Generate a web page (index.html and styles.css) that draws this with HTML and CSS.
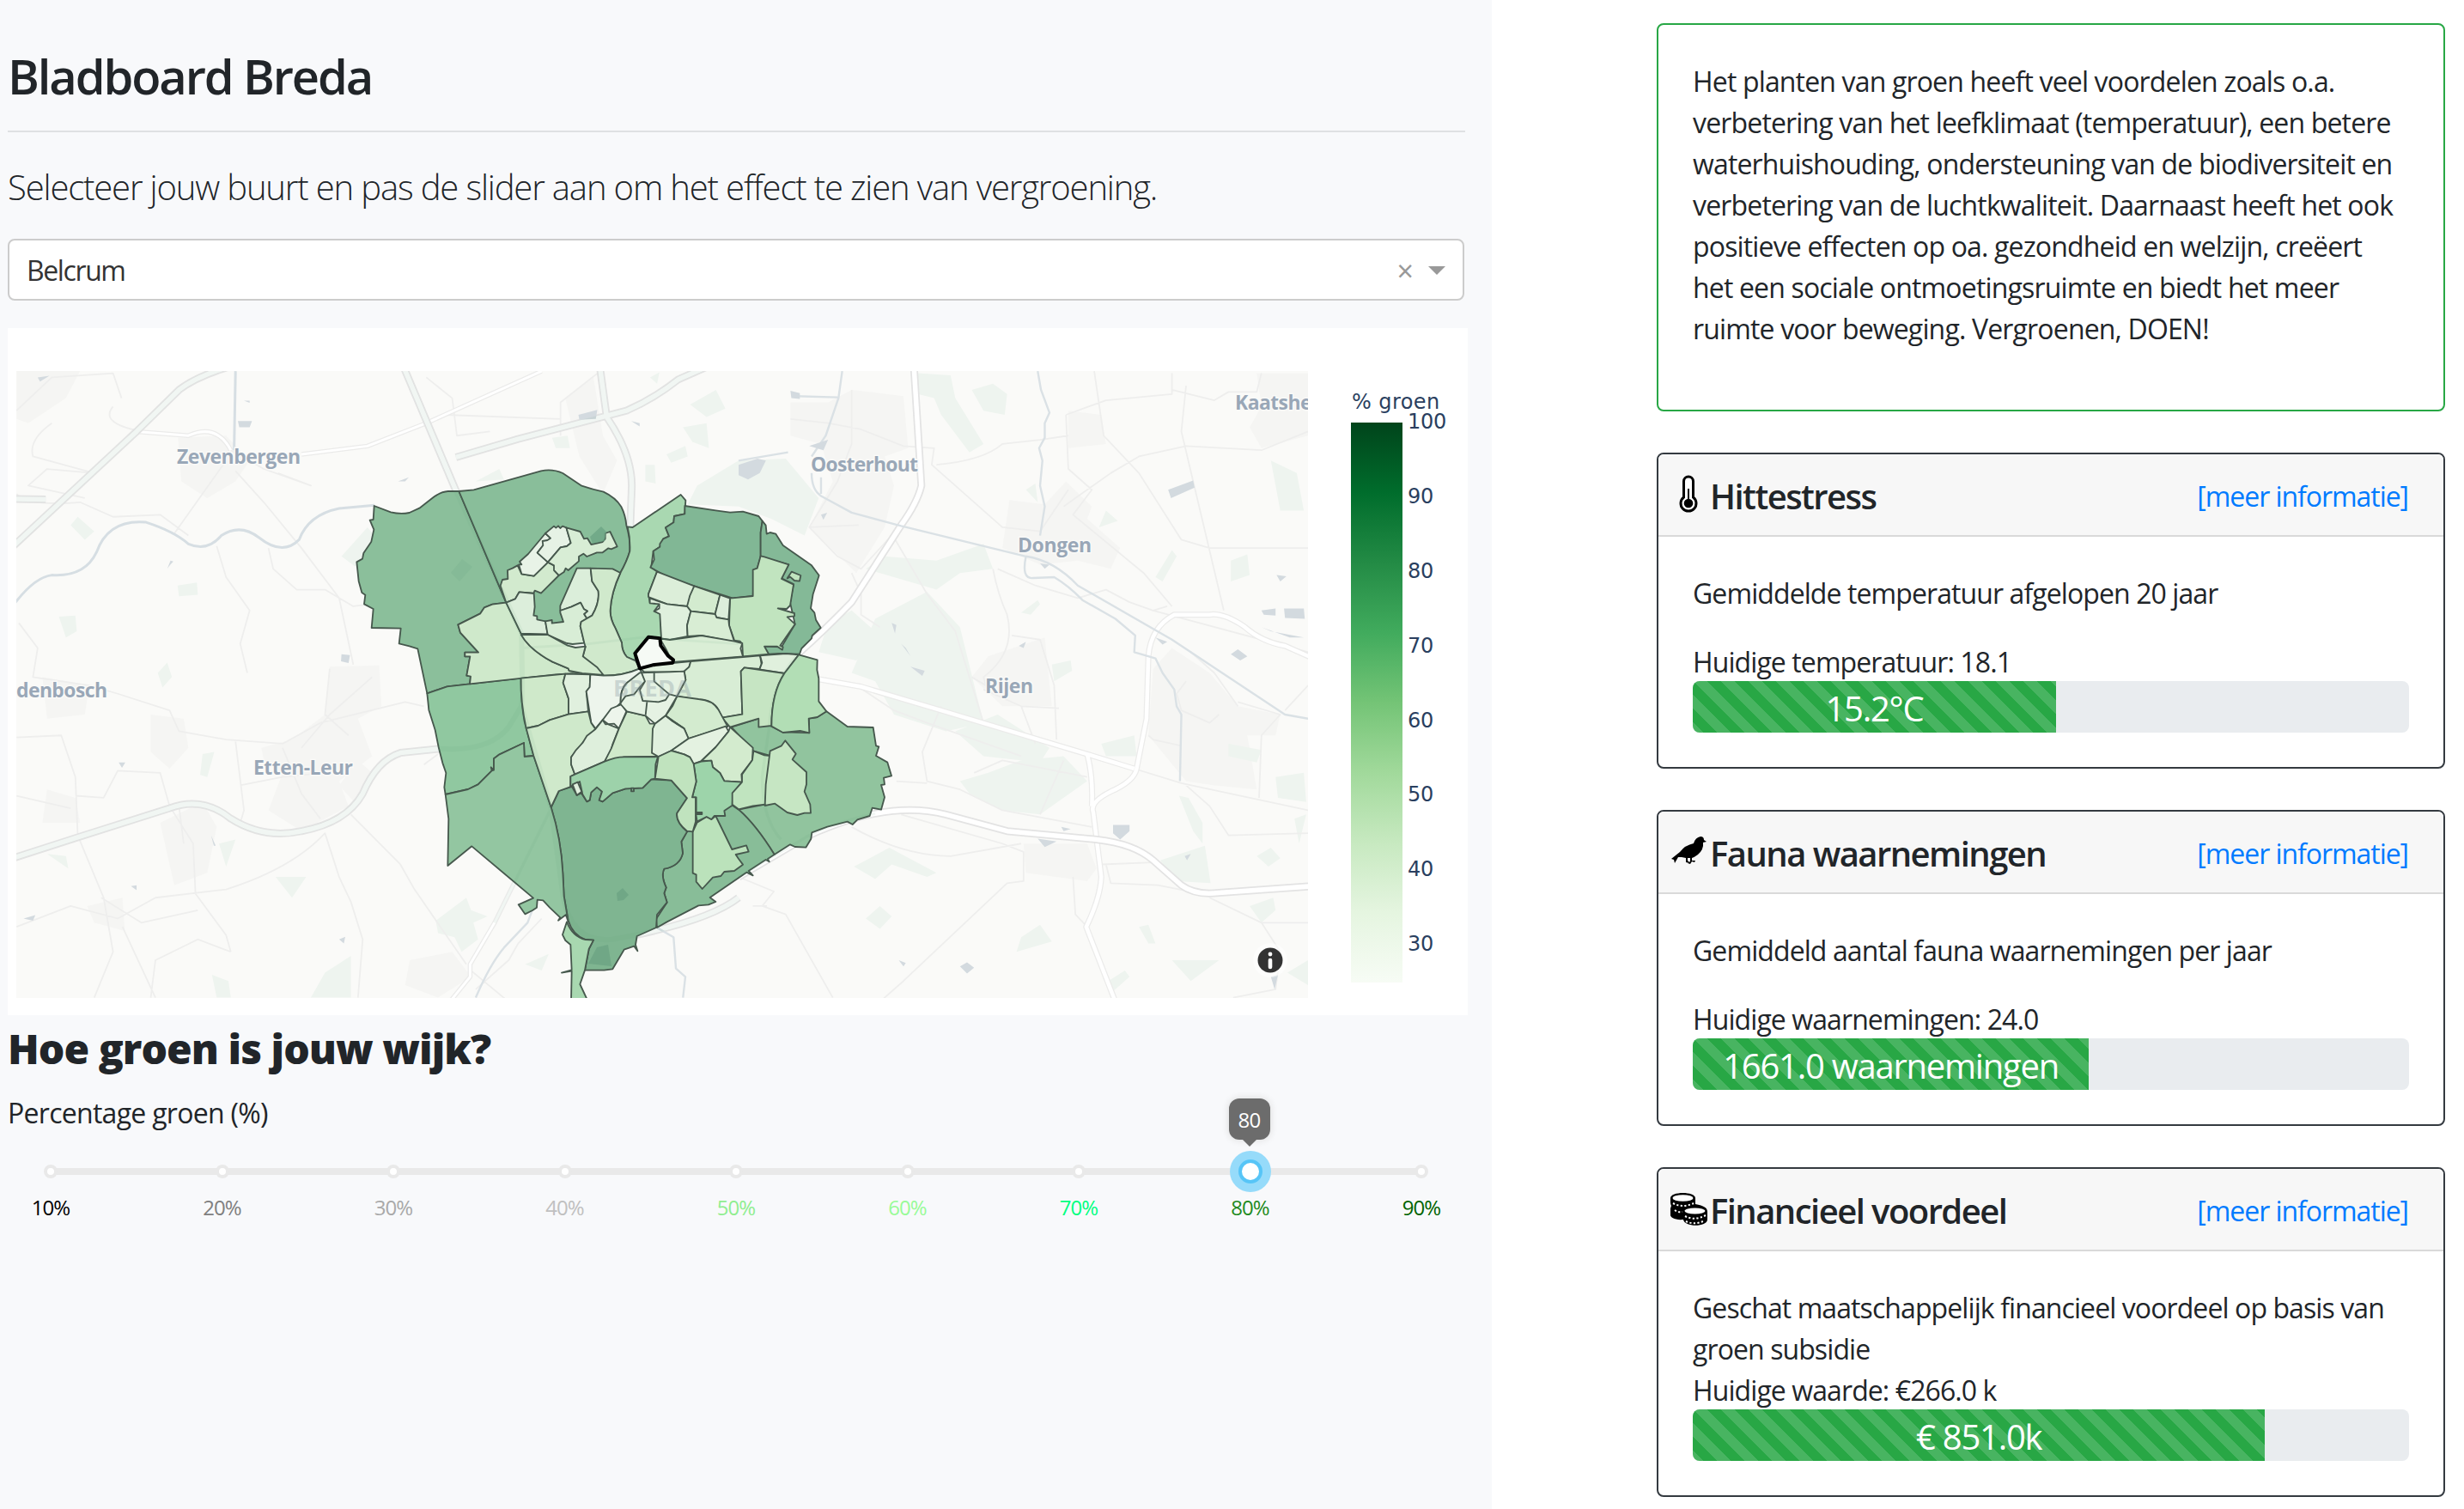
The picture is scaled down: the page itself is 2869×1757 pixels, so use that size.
FILE: index.html
```html
<!DOCTYPE html>
<html lang="nl">
<head>
<meta charset="utf-8">
<title>Bladboard Breda</title>
<link rel="stylesheet" href="styles.css">
</head>
<body>
<main class="page">
<section class="panel">
<h1 class="title"><span>Bladboard Breda</span></h1>
<hr class="rule">
<p class="lead">Selecteer jouw buurt en pas de slider aan om het effect te zien van vergroening.</p>
<div class="select"><span class="select-value">Belcrum</span><span class="select-clear">×</span><span class="select-arrow"></span></div>
<svg class="chart" viewBox="9 382 1700 800">
<defs>
<linearGradient id="greens" x1="0" y1="1" x2="0" y2="0">
<stop offset="0" stop-color="#f7fcf5"/><stop offset=".125" stop-color="#e5f5e0"/><stop offset=".25" stop-color="#c7e9c0"/><stop offset=".375" stop-color="#a1d99b"/><stop offset=".5" stop-color="#74c476"/><stop offset=".625" stop-color="#41ab5d"/><stop offset=".75" stop-color="#238b45"/><stop offset=".875" stop-color="#006d2c"/><stop offset="1" stop-color="#00441b"/>
</linearGradient>
<clipPath id="frame"><rect x="19" y="432" width="1504" height="730"/></clipPath>
<g id="west-roads">
<path d="M0 475L290 170L380 70Q420 35 500 10M0 1205L165 1145L360 1075Q430 1045 490 1100Q560 1150 640 1130Q735 1110 770 1040Q800 960 850 942L935 932Q1040 940 1080 880L1107 830M855 10L968 312L1107 655Q1110 800 1107 830L1170 1075L1196 1290Q1215 1400 1300 1390Q1500 1350 1568 1290"/>
<path d="M968 232L1100 188L1330 120Q1390 90 1440 45L1500 15M1273 10L1288 135Q1345 230 1341 310L1338 400M0 332L97 333"/>
</g>
<g id="east-roads">
<path d="M372 10L388 300Q380 340 345 395L240 580Q180 650 130 700Q70 770 65 880M0 1240L150 1140Q230 1100 290 1088Q370 1070 440 1090L570 1130L760 1150Q840 1160 880 1200L940 1260Q970 1285 1020 1278L1220 1262"/>
</g>
<g id="east-links">
<path d="M120 755L260 783L430 840L740 945L840 980M1220 715L1160 685Q1110 675 1075 640Q1030 605 1000 610L925 610Q875 640 870 710L866 860L845 980Q840 1010 790 1035Q745 1060 753 1085L770 1240Q768 1290 738 1360L800 1540M740 945Q753 1000 750 1070"/>
</g>
</defs>
<rect x="9" y="382" width="1700" height="800" fill="#fff"/>
<g clip-path="url(#frame)">
<rect x="19" y="432" width="1504" height="730" fill="#fafaf8"/>
<!-- western basemap tiles -->
<g class="tile" transform="translate(0 420) scale(.54845 .4847)">
<path class="town" d="M35 25L170 25L140 90L60 150L35 140ZM378 185L480 180L530 240L500 290L440 330L385 290ZM700 735L805 732L810 830L760 860L790 950L720 1010L740 1070L640 1130L570 1080L600 990L560 960L555 930L620 910L690 850ZM320 850L390 860L400 930L360 980L320 940ZM90 760L190 780L180 850L100 860ZM340 1110L430 1060L460 1120L440 1230L370 1260ZM100 1030L160 1050L170 1110L90 1110ZM185 1310L260 1290L265 1370L200 1350ZM870 1440L960 1420L1000 1480L930 1530L860 1500ZM1200 90L1260 40L1280 180L1310 240L1280 320L1230 230ZM720 1020L760 960L790 990L760 1070Z"/>
<path class="wood" d="M150 395L165 375L200 410L180 430ZM377 540L418 533L420 562L380 566ZM125 615L160 612L163 650L140 665ZM335 750L355 725L365 760L345 785ZM430 945L455 940L440 1000L425 995ZM925 1345L990 1290L1000 1320L1035 1335L1005 1350L1015 1390L980 1420L965 1385L930 1375ZM660 1530L690 1470L745 1430L745 1530ZM450 1475L485 1490L490 1530L460 1530ZM585 1240L650 1240L620 1290ZM1465 105L1520 70L1540 115L1500 135ZM1450 160L1500 150L1505 210L1470 195ZM1415 225L1455 205L1460 230L1425 245ZM1370 250L1390 250L1392 295L1370 290ZM1010 290L1060 260L1070 285ZM1115 1450L1165 1425L1150 1465ZM725 470L780 400L795 420L755 495ZM100 1185L140 1190L145 1220ZM1380 40L1400 28L1395 55ZM1172 185L1205 180L1210 210L1180 210ZM1480 300L1568 240L1568 350L1460 345ZM465 1160L500 1150L480 1215Z"/>
<path class="lane" d="M35 120L110 40L240 30L258 90M290 170L400 180Q460 150 490 215L560 260L660 300L590 270M480 240L370 415M500 265L560 340L640 450L720 570L750 730M110 150Q60 190 70 230L200 270L100 260L60 300L180 330M240 110Q210 150 300 170M35 320Q60 350 170 340L240 375L340 370L400 420M640 225L780 205L905 150L1150 25M905 40L960 90L970 180L1040 170M945 130L1190 140M1190 180L1190 100L1280 20M460 445L480 520L530 600L510 680L525 750M570 450L580 500L630 550L690 550L750 590L820 580L870 590L900 630L1100 640M40 630L80 690L70 760L190 780L250 800L360 840L380 890L480 910L600 920L680 870L860 820L900 830M640 930L700 850L790 760M500 915L518 1080L510 1110M600 930L640 1040L680 1100M35 905L130 900L160 1000L165 1140L220 1290L240 1420L200 1530M160 1045L220 1050L250 985L340 990L360 1070L410 1160L415 1280L480 1380L490 1420M35 1045L150 1075M35 1360L150 1310L250 1340L330 1290L480 1270Q620 1220 690 1135L720 1240L745 1300L770 1390L760 1530M745 1090L850 1210L880 1270L990 1450M215 1290L300 1350L420 1320M260 1360L330 1530M490 1420L420 1390L330 1440L320 1530M380 1070L390 1160M700 740L690 850L740 900M510 1020L600 1000L690 990M900 970L930 945M1150 1340L1100 1400L1080 1440L1010 1510M1000 1465L1080 1540"/>
<path class="casing thin" d="M290 170L400 180Q460 150 490 215M640 225L780 205L905 150L1150 25"/><path class="road thin" d="M290 170L400 180Q460 150 490 215M640 225L780 205L905 150L1150 25"/>
<use href="#west-roads" class="casing"/><use href="#west-roads" class="road"/>
<path class="casing thin" d="M1170 1075L1050 1350L998 1450L998 1480L955 1540"/><path class="road thin" d="M1170 1075L1050 1350L998 1450L998 1480L955 1540"/>
<path class="river" d="M20 600Q70 520 110 515Q180 520 205 460Q230 380 310 388Q370 410 400 440Q440 460 470 420Q510 390 550 425Q600 470 635 430Q655 370 720 355L795 347M500 25L497 215"/>
<path class="stream" d="M1010 1530Q1040 1450 1070 1410L1120 1350L1130 1320M1395 1362L1430 1385L1435 1460L1455 1480L1450 1530"/>
<path class="water" d="M505 145L535 145L530 160L508 160ZM725 705L743 707L740 726L724 722ZM1228 130L1268 118L1265 140L1230 142ZM50 1340L75 1332L70 1345ZM720 1390L733 1384L730 1400ZM278 1262L290 1260L290 1272ZM1340 145L1358 150L1358 158ZM845 290L868 280L860 290ZM518 96L530 96L530 101ZM252 965L266 965L259 978ZM80 40L105 36L85 50ZM448 1140L458 1165L454 1165ZM355 500L362 480L368 482L360 492Z"/>
</g>
<!-- eastern basemap tiles -->
<g class="tile" transform="translate(860 420) scale(.54845 .4847)">
<path class="town" d="M240 70L350 85L360 210L310 230L330 300L310 400L250 510L150 400L200 290L175 200L110 180L110 100L190 100ZM575 335L650 345L695 290L750 350L740 380L810 450L790 500L720 480L640 490L560 450ZM530 710L650 665L665 830L560 830L495 760ZM920 690L1000 750L1060 830L1150 850L1140 900L1080 900L1100 1030L1010 1020L950 1010L870 900L880 740ZM1100 30L1209 30L1209 180L1110 210L1085 160L1110 110ZM605 1160L740 1160L760 1220L740 1250L610 1230ZM700 120L770 130L780 200L700 210Z"/>
<path class="wood" d="M380 30L450 35L460 90L520 200L490 220L430 130L415 90L380 80ZM495 70L540 55L570 80L565 130L520 120ZM0 240L100 235L170 330L140 420L70 380L0 350ZM290 620L400 555L470 640L520 870L440 890L330 850L290 770L240 750ZM190 630L240 600L300 660L250 720L170 700ZM270 500L310 470L420 480L520 440L540 500L470 510L420 550ZM610 310L630 295L635 340ZM885 520L920 455L930 470L900 530ZM1045 480L1080 465L1085 515L1045 530ZM1130 240L1185 270L1200 360L1150 360ZM665 730L705 720L708 745L670 770ZM460 890L550 850L660 930L640 965L520 950ZM470 1010L530 990L600 960L690 950L740 1010L640 1090L560 1080L490 1040ZM1140 1000L1200 990L1205 1060L1145 1050ZM935 1045L955 1050L985 1110L985 1160L965 1130ZM1180 1100L1205 1090L1190 1160ZM895 1200L990 1165L1002 1255L930 1250ZM245 1215L320 1170L420 1230L400 1240L325 1210L290 1245ZM270 1340L300 1310L325 1335L300 1365ZM590 1420L600 1385L640 1355L665 1395ZM850 1360L870 1355L885 1400L870 1400ZM920 1440L1020 1440L960 1490ZM1085 1310L1135 1290L1140 1320L1110 1350ZM1165 1470L1209 1440L1209 1500ZM785 1490L820 1465L830 1480L790 1520ZM1100 1190L1130 1170L1150 1195L1125 1215ZM600 605L635 575L640 585L620 610ZM1040 920L1110 935L1100 965L1040 950ZM765 400L780 360L805 385ZM770 920L840 900L845 950L780 950Z"/>
<path class="lane" d="M240 70L240 200L210 290L150 400L210 470L260 500L345 395M110 140L190 150L260 165L350 205L415 210L410 250L560 400L640 410L700 310M420 250Q520 240 560 200L640 190L700 180M755 25L775 180L850 270L940 430L1000 450L1209 450M695 130L700 260L750 310L710 370L860 510L920 590M695 130L780 95L920 80L920 30M920 70L1010 95L1040 75L1100 75L1110 30M950 60L940 170L1030 600M690 350L790 270L850 230L950 205L1110 215L1209 170M150 400L255 395M330 425L400 560L460 650L520 870M540 500Q550 560 570 610Q590 700 520 760L530 800M550 500L630 540L720 570L780 550L830 580L880 600L910 590M580 660L640 670L670 780L675 910M520 790L600 830L680 835M600 830L630 920M430 830L390 940L400 1010L470 1030L560 1080L750 1120M500 990L560 960L740 1000M640 1090L690 960M840 980L940 1015L1209 1080M880 600L1209 700M950 770L930 800L940 840L1000 870L1020 850M1060 820L1150 850L1110 900L1105 1050M1160 840L1209 780M240 510L260 560L260 610L300 640M240 1120Q350 1190 450 1190L600 1160M345 1090L560 1160L605 1180L605 1250L570 1255L350 1490L300 1540M0 1240L75 1275L50 1310L100 1330L200 1530M780 1210L790 1255L890 1260L980 1280M770 1210L880 1205M1000 1290L1110 1350L1209 1350M1110 1350L1150 1420L1140 1510L1050 1530M950 1020L1000 1070L1040 1140L1209 1135M335 1010L400 1015M710 1240L715 1330L740 1360M870 900L880 910L940 925M960 700L1010 750L1060 830M540 790L495 760M60 1310L30 1310M250 780L330 840L400 870L600 950"/>
<use href="#east-links" class="casing link"/><use href="#east-links" class="road link"/>
<use href="#east-roads" class="casing"/><use href="#east-roads" class="road"/>
<path class="stream" d="M635 25L642 70L660 125L650 150L650 185L638 210L645 240L640 300L650 350L640 420M155 270Q155 310 175 325L240 365L345 397L610 470Q670 480 720 540L920 670L1160 850L1209 860M610 470Q600 525 625 522L670 520Q700 540 730 575L800 620L842 660L840 700L885 715L900 750L925 790L930 830L940 850L937 1010M220 25L212 90L185 180L155 230M175 320L175 280M0 240L105 220M120 85L210 88"/>
<path class="water" d="M0 250L40 235L58 240L45 270L20 285L0 275ZM912 310L965 288L968 305L918 330ZM1158 595L1200 595L1202 620L1160 618ZM795 1115L830 1115L830 1130L810 1150L795 1135ZM470 1455L485 1445L500 1458L485 1472ZM635 1148L675 1155L650 1168ZM640 487L660 490L650 500ZM1045 705L1060 693L1080 710L1065 720ZM325 630L335 635L332 655ZM345 680L355 690L365 710ZM365 735L395 745L390 757ZM150 205L190 190L180 215ZM110 72L130 78L130 92L112 90ZM1130 1480L1145 1475L1138 1510ZM340 1440L355 1447L350 1455ZM1110 600L1140 595L1140 612L1115 610ZM1110 640L1130 650L1200 665L1170 665ZM175 370L188 365L180 382ZM595 685L610 675L605 690ZM885 665L910 675L900 682ZM1142 515L1163 518L1150 530ZM947 1190L960 1185L952 1200ZM685 1120L705 1125L690 1130Z"/>
</g>
<g class="places">
<text x="206" y="540" textLength="144">Zevenbergen</text><text x="19" y="812" textLength="106">denbosch</text><text x="295" y="902" textLength="116">Etten-Leur</text><text x="944" y="549" textLength="125">Oosterhout</text><text x="1185" y="643" textLength="86">Dongen</text><text x="1147" y="807" textLength="56">Rijen</text><text x="1438" y="477" textLength="104">Kaatsheu</text>
</g>
<!-- neighbourhoods, in thirds of a pixel -->
<g class="areas" transform="translate(400 520) scale(.333333)">
<path fill="#8bbf9b" d="M107 207L165 229Q198 237 230 231L265 215L310 180Q340 157 365 156L403 156L568 545L520 551L492 562L478 583L400 622L408 650L471 719L424 719L424 733L442 733L430 800L444 803L441 829L362 838L292 862L259 706L230 697L194 688L200 635L98 633L104 567L72 550L76 518L64 510L53 470L46 403L66 392L70 372L97 332L106 290L92 257L104 255Z"/>
<path fill="#89be9a" d="M403 156L455 151L690 85Q730 77 766 93L832 137Q870 150 908 158Q950 178 970 210Q985 240 988 275Q1002 320 1000 365Q990 400 967 441L820 620L660 620L600 560L568 545Z"/>
<path fill="#a9d8b1" d="M992 280L1010 282L1178 168L1195 188L1192 235L1155 243L1153 265L1125 283L1137 313L1117 322L1105 350L1082 365L1075 420L1095 437L1065 515L1070 545L1103 550L1085 575L1108 585L1110 670L1065 663L1018 720L1020 748L990 735Q972 715 972 685L950 635Q930 600 932 570Q935 510 967 441Q990 400 1000 365Q1002 320 992 280Z"/>
<path fill="#91c49e" d="M1687 925L1760 978L1850 981L1860 1045L1870 1048L1860 1080L1900 1103L1914 1150L1887 1157L1890 1180L1878 1182L1890 1225L1878 1268L1847 1262L1838 1290L1795 1303L1778 1320L1760 1310L1690 1328L1636 1348L1633 1370L1615 1400L1577 1398L1560 1390L1505 1425Q1440 1320 1380 1268L1472 1250L1490 1080L1432 1063L1355 980L1450 950L1495 977L1535 997L1627 1000L1625 950L1655 945Z"/>
<path fill="#88bd98" d="M1505 1425L1482 1440L1487 1450L1475 1443L1415 1482L1430 1498L1408 1487L1280 1575L1300 1590L1275 1600L1240 1603L1130 1660L1095 1680L1092 1650L1130 1592L1120 1560L1127 1540Q1108 1500 1120 1475Q1175 1465 1185 1420L1180 1380L1200 1345L1235 1310L1358 1253L1380 1268Q1440 1320 1505 1425Z"/>
<path fill="#7fb591" d="M725 1260L752 1203L798 1188L815 1218L830 1210L850 1240L860 1235L865 1208L885 1190L903 1205L893 1235L905 1240L940 1210L985 1195L1045 1192L1075 1162L1145 1166L1200 1228L1165 1280Q1160 1310 1200 1345L1180 1380L1185 1420Q1175 1465 1120 1475Q1108 1500 1127 1540L1120 1560L1130 1592L1095 1635L1092 1680L1025 1710L1020 1740L1027 1762L1015 1745L980 1757L940 1825L910 1829L843 1829L857 1755L873 1724L845 1722Q800 1705 785 1655L770 1570L766 1490Q760 1370 725 1260Z"/>
<path fill="#a8d8b0" d="M780 1660Q800 1712 845 1722L873 1724L857 1755L843 1829L826 1878L855 1940L795 1940L797 1832L762 1838L797 1828L793 1740L775 1725L765 1705Z"/>
<path fill="#90c8a0" d="M292 862L362 838L620 809Q618 880 632 960L664 1080L632 1083L630 1035L545 1075L525 1090L525 1130L515 1120L518 1132L470 1180L435 1197L356 1215L352 1190L358 1140L346 1105L332 1050L320 990L298 920L295 890Z"/>
<path fill="#93c6a1" d="M356 1215L435 1197L470 1180L518 1132L525 1130L525 1090L545 1075L630 1035L632 1083L664 1080L725 1260Q760 1370 766 1490L770 1570L785 1660L777 1635L750 1655L757 1645L720 1610L697 1585L677 1583L675 1610L660 1620L634 1633L611 1600L663 1577L448 1396L364 1464L367 1300Z"/>
<path fill="#cfe9cb" d="M568 545L520 551L492 562L478 583L400 622L408 650L471 719L424 719L424 733L442 733L430 800L444 803L441 829L740 796L834 790L788 783L785 775L730 752Q650 710 620 653Z"/>
<path fill="#d2eace" d="M548 486L555 465L574 462L573 432L590 425L608 415L622 445L665 452L714 404L735 415L752 450L690 512L668 503L664 512L614 508L600 532L568 545Z"/>
<path fill="#e8f3e7" d="M622 412L615 402L645 375L705 303L723 320L697 345L677 371L714 404L665 452L622 445L612 412Z"/>
<path fill="#e6f2e5" d="M705 303L735 278L742 284L750 277L757 285L765 278L778 283L794 337L780 348L758 352L714 404L677 371L697 345L695 330L712 327L723 320L705 303Z"/>
<path fill="#d8edd5" d="M778 283L827 297L840 322L852 320L865 342L905 333L914 322L914 303L931 297L956 349L935 358L925 355L905 370L885 370L850 384L838 374L822 384L822 400L785 432L776 425L770 438L752 450L735 432L735 415L714 404L758 352L780 348L794 337Z"/>
<path fill="#dceedb" d="M568 545L600 532L614 508L665 513L668 560L664 590L676 592L676 604L705 610L713 655L620 653Z"/>
<path fill="#dbeeda" d="M815 425L863 425L868 470L890 505Q895 545 868 590L850 601L840 585L852 575L840 568L828 545L795 560L757 573L757 556Z"/>
<path fill="#d8edd6" d="M757 573L795 560L828 545L840 568L852 575L840 585L850 601L830 612L827 627L841 686L800 690L780 687L713 657L705 610L728 606L728 617L768 612L757 580Z"/>
<path fill="#d0e9cc" d="M863 425L940 427L967 441Q935 510 932 570Q930 600 950 635L972 685Q972 715 990 735L1020 748L1035 775Q980 800 908 800L836 733L845 700L841 686L827 627L830 612L868 590Q895 545 890 505L868 470Z"/>
<path fill="#d3ebcf" d="M620 657L713 657L783 695L810 702L845 698L836 733L885 770L908 798L834 792L788 783L785 775L730 752Q650 710 620 657Z"/>
<path fill="#cfe9ca" d="M620 809L775 794L767 825L786 880L786 935L720 955L680 975L638 984Q618 890 620 809Z"/>
<path fill="#e0f0de" d="M775 794L862 796L860 840L848 855L855 925L786 935L786 880L767 825Z"/>
<path fill="#edf5ec" d="M862 796L908 800Q980 800 1035 775L1060 785L990 825Q965 850 968 895L905 955L880 985L865 965L848 855L860 840Z"/>
<path fill="#cfe9cb" d="M638 984L680 975L720 955L786 935L855 925L865 965L880 987L835 1035L795 1085L795 1110L808 1145L793 1152L793 1188L752 1203L725 1260L664 1080Z"/>
<path fill="#deefdc" d="M880 987L905 955L925 970L962 985L940 1040L935 1060L912 1100L808 1145L795 1110L795 1085L812 1060L835 1035L850 1010Z"/>
<path fill="#edf5eb" d="M905 955L935 915L972 900L988 925L962 985L945 968L915 970Z"/>
<path fill="#d0e9cb" d="M962 985L990 925L1055 940L1070 968L1088 968L1080 1060L1098 1083L980 1084L912 1100L935 1055Z"/>
<path fill="#9dd2aa" d="M793 1152L808 1145L912 1100Q950 1084 980 1084L1098 1083L1090 1110L1088 1160L1075 1162L1045 1192L985 1195L940 1210L905 1240L893 1235L903 1205L885 1190L865 1208L860 1235L850 1240L835 1215L825 1170L793 1188Z"/>
<path fill="#e0f0de" d="M800 1180L818 1172L832 1205L815 1218Z"/><path fill="#80b592" d="M1005 1193L1014 1193L1014 1204L1005 1204Z"/>
<path fill="#81b795" d="M1192 207L1300 223L1350 230L1395 227L1450 243L1463 260L1457 300L1457 385L1445 425L1435 430L1430 522L1360 530L1330 520L1140 460L1072 422L1085 395L1082 365L1105 350L1105 340L1117 322L1137 313L1125 283L1153 265L1155 243L1192 235Z"/>
<path fill="#84b997" d="M1463 260L1475 275L1478 305L1490 300L1510 305L1535 345L1635 415L1661 450L1640 515L1632 565L1645 580L1650 605L1667 633L1637 660L1635 670L1600 705L1593 725L1520 723L1485 725L1470 698L1530 700L1577 620L1560 545L1572 480L1530 460L1555 412L1457 385L1457 300Z"/>
<path fill="#c1e4bf" d="M1457 382L1470 385L1555 412L1530 462L1572 482L1560 555L1548 567L1517 565L1575 582L1575 592L1550 595L1577 620L1525 695L1535 700L1533 710L1515 698L1470 698L1485 725L1395 733L1393 690L1385 680L1365 677L1347 625L1350 530L1430 522L1430 430L1445 425Z"/>
<path fill="#c1e4bf" d="M1550 460L1565 437L1597 450L1593 470L1575 468L1560 455Z"/>
<path fill="#dceed9" d="M1095 437L1225 487L1215 518L1210 545L1200 558L1130 550L1065 525L1065 515Z"/>
<path fill="#d3ebcf" d="M1225 487L1315 518L1298 585L1213 575L1200 558L1210 520Z"/>
<path fill="#dceedb" d="M1315 518L1350 530L1345 604L1303 597L1298 585Z"/>
<path fill="#dff0dd" d="M1070 530L1130 550L1200 558L1213 575L1200 625L1202 663L1140 675L1110 670L1105 585L1085 575L1103 565L1103 550L1070 547Z"/>
<path fill="#d8edd4" d="M1213 575L1298 585L1303 597L1345 604L1347 625L1365 682L1250 660L1202 663L1200 625Z"/>
<path fill="#daeed6" d="M1105 670L1140 675L1250 660L1365 680L1393 687L1387 705L1395 733L1150 753L1125 705Z"/>
<path fill="#e2f1df" d="M1035 775L1080 763L1213 750L1207 770L1190 785L1140 787L1050 787Z"/>
<path fill="#d8edd5" d="M1213 750L1395 735L1455 730L1460 760L1453 777L1400 772L1388 785L1393 935L1322 947L1310 920Q1290 885 1240 885L1165 872L1195 815L1190 785L1207 770Z"/>
<path fill="#e0f0dd" d="M1455 730L1545 723L1590 727L1540 792L1453 778L1462 755Z"/>
<path fill="#c6e5c3" d="M1388 785L1400 772L1540 792Q1495 860 1495 975L1450 980L1450 950L1350 980L1322 947L1393 935Z"/>
<path fill="#b2deb5" d="M1590 727L1655 745L1654 780L1660 810L1660 890L1687 925L1655 945L1625 950L1627 1000L1595 993L1535 999L1495 977Q1495 860 1540 792Z"/>
<path fill="#d3ebcf" d="M1165 872L1240 882Q1290 885 1310 920L1342 978L1205 1020L1190 985L1125 940L1150 905Z"/>
<path fill="#e5f2e3" d="M1035 790L1140 787L1190 785L1195 815L1165 872L1125 940L1088 968L1055 940L990 925L968 900Q965 850 990 825Z"/>
<path fill="#e0f0de" d="M1088 968L1125 940L1150 960L1165 968L1190 985L1205 1020L1145 1062L1100 1083L1077 1070L1080 985Z"/>
<path fill="#e4f2e1" d="M1205 1020L1335 977L1345 995L1300 1050L1250 1098L1223 1108L1210 1085L1190 1075L1145 1062Z"/>
<path fill="#d3ebce" d="M1350 980L1430 1052L1428 1095L1405 1125L1390 1145L1392 1172L1330 1168L1315 1140L1290 1120L1285 1097L1250 1098L1300 1050L1345 995Z"/>
<path fill="#bbe2bb" d="M1235 1313L1268 1293L1285 1302L1300 1290L1357 1407L1407 1393L1415 1415L1370 1425L1380 1440L1395 1460L1365 1482L1330 1485L1318 1500L1290 1505L1253 1545L1232 1520L1232 1495L1220 1490L1220 1345Z"/>
<path fill="#9dd4aa" d="M1223 1108L1250 1100L1285 1097L1290 1120L1315 1140L1330 1168L1392 1172L1360 1210L1358 1253L1330 1272L1333 1290L1295 1290L1285 1302L1268 1293L1235 1310L1230 1278L1252 1278L1252 1284L1232 1284L1232 1225L1218 1225L1232 1170Z"/>
<path fill="#c0e3be" d="M1100 1083L1145 1062L1190 1075L1210 1085L1223 1108L1232 1170L1218 1225L1230 1225L1230 1310L1220 1345L1200 1343Q1160 1310 1165 1280L1200 1228L1145 1166L1088 1160Z"/>
<path fill="#c0e4bf" d="M1432 1063L1470 1078L1490 1080L1472 1250L1430 1255L1380 1267L1358 1250L1358 1210L1392 1172L1392 1145L1428 1095Z"/>
<path fill="#c6e6c3" d="M1490 1063L1530 1045L1543 1027L1580 1073L1568 1093L1617 1137L1617 1180L1610 1205L1630 1250L1632 1280L1610 1280L1585 1287L1550 1278L1507 1247L1472 1254L1475 1180Z"/>
<path fill="none" d="M1035 775L1053 820L1035 840L1015 865L985 872L968 895M1053 820L1035 850L1045 888L1100 892L1125 885L1138 865L1120 850L1085 820L1085 790M1060 892L1055 938M1138 865L1165 872M905 955L925 970M1125 940L1165 970L1190 985"/>
<path class="chosen" fill="#f6faf5" d="M1065 665L1105 670L1108 695L1133 730L1152 745L1150 755L1080 763L1035 775L1018 722Z"/>
</g>
<g class="ghost" transform="translate(0 420) scale(.54845 .4847)"><use href="#west-roads"/><path d="M1170 1075L1050 1350M1107 690L1250 680L1360 665L1568 680"/></g>
<g class="ghost" transform="translate(860 420) scale(.54845 .4847)"><path d="M130 700Q70 770 65 880L50 1000Q50 1100 90 1150M0 1240L150 1140Q230 1100 290 1088"/></g>
<path fill="#6ba383" opacity=".75" d="M687 625L700 613L706 619L704 630L690 633ZM695 1103L708 1100L712 1125L685 1122ZM718 1040L725 1034L732 1042L726 1048L719 1049Z"/>
<path fill="#6fa986" opacity=".2" d="M525 667L538 651L550 660L535 677Z"/>
<text class="city" x="714" y="811" textLength="91">BREDA</text>
<circle cx="1479" cy="1118" r="20" fill="#fff" opacity=".5"/><circle cx="1479" cy="1118" r="14.5" fill="#333"/><circle cx="1479" cy="1111" r="2.4" fill="#fff"/><path d="M1479 1118V1126" stroke="#fff" stroke-width="4.6" stroke-linecap="round"/>
</g>
<rect x="1573" y="492" width="60" height="652" fill="url(#greens)"/>
<g class="ticks"><text x="1574" y="476" textLength="102">% groen</text><text x="1639" y="499" textLength="45">100</text><text x="1639" y="586">90</text><text x="1639" y="673">80</text><text x="1639" y="760">70</text><text x="1639" y="847">60</text><text x="1639" y="933">50</text><text x="1639" y="1020">40</text><text x="1639" y="1107">30</text></g>
</svg>
<h2 class="question">Hoe groen is jouw wijk?</h2>
<p class="slider-title">Percentage groen (%)</p>
<div class="slider">
<div class="track"><i></i><i></i><i></i><i></i><i></i><i></i><i></i><i class="handle"><b class="tip">80</b></i><i></i></div>
<div class="marks"><span class="m10">10%</span><span class="m20">20%</span><span class="m30">30%</span><span class="m40">40%</span><span class="m50">50%</span><span class="m60">60%</span><span class="m70">70%</span><span class="m80">80%</span><span class="m90">90%</span></div>
</div>
</section>
<aside class="cards">
<article class="card intro"><p>Het planten van groen heeft veel voordelen zoals o.a.<br>verbetering van het leefklimaat (temperatuur), een betere<br>waterhuishouding, ondersteuning van de biodiversiteit en<br>verbetering van de luchtkwaliteit. Daarnaast heeft het ook<br>positieve effecten op oa. gezondheid en welzijn, creëert<br>het een sociale ontmoetingsruimte en biedt het meer<br>ruimte voor beweging. Vergroenen, DOEN!</p></article>
<article class="card">
<header class="head"><svg class="icon" viewBox="0 0 48 48"><path d="M18.500 29V10.500a5.500 5.500 0 0 1 11 0V29a9 9 0 1 1-11 0Z" fill="#fff" stroke="#000" stroke-width="3"/><circle cx="24" cy="36" r="5.300"/><path d="M24 36V19" stroke="#000" stroke-width="2"/></svg><h3>Hittestress</h3><a>[meer informatie]</a></header>
<div class="body"><p class="gap">Gemiddelde temperatuur afgelopen 20 jaar</p><p>Huidige temperatuur: 18.1</p><div class="progress"><div class="bar" style="width:50.7%">15.2°C</div></div></div>
</article>
<article class="card">
<header class="head"><svg class="icon bird" viewBox="0 0 48 48"><path d="M4 31L14 23Q20 15 30 13Q32 6 38 5Q42 5 42 9L45 11L41 12Q42 20 35 26Q31 29 28 30L28 33L32 33L31 35L28 34L26 37L23 36L26 34L26 30L23 30L23 33L26 36L21 35L21 30L16 29L12 29L8 36L7 32Z"/></svg><h3>Fauna waarnemingen</h3><a>[meer informatie]</a></header>
<div class="body"><p class="gap">Gemiddeld aantal fauna waarnemingen per jaar</p><p>Huidige waarnemingen: 24.0</p><div class="progress"><div class="bar" style="width:55.3%">1661.0 waarnemingen</div></div></div>
</article>
<article class="card">
<header class="head"><svg class="icon coins" viewBox="0 0 48 48"><path d="M3 11C3 3 32 3 32 11V18C42 20 46 22 46 27V36C46 45 19 45 18 36C8 37 3 33 3 31V23L4 20Q3 18 3 16Z"/><ellipse cx="17.500" cy="11" rx="12" ry="3.800" fill="#fff"/><ellipse cx="31.500" cy="26" rx="12" ry="3.500" fill="#fff"/><path d="M6 17Q17 23 30 17M8 25Q12 28 17 27M20 32Q31 38 44 31M21 38Q31 43 43 37" fill="none" stroke="#fff" stroke-width="2" stroke-dasharray="2.200 2.400"/></svg><h3>Financieel voordeel</h3><a>[meer informatie]</a></header>
<div class="body"><p>Geschat maatschappelijk financieel voordeel op basis van<br>groen subsidie</p><p>Huidige waarde: €266.0 k</p><div class="progress"><div class="bar" style="width:79.9%">€ 851.0k</div></div></div>
</article>
</aside>
</main>
</body>
</html>
```
FILE: styles.css
```css
* { box-sizing: border-box; }
body { margin: 0; background: #fff; color: #212529; font: 32px/48px "Open Sans", "Noto Sans", sans-serif; letter-spacing: -.91px; }
h1, h2, h3, p { margin: 0; font-weight: 400; }
.page { display: flex; justify-content: space-between; height: 1757px; overflow: hidden; }
.panel { width: 1737px; padding: 54px 28px 0 9px; background: #f8f9fb; }
.title { font-size: 56px; font-weight: 600; line-height: 68px; letter-spacing: -2.1px; }
.rule { height: 2px; margin: 30px 3px 34px 0; border: 0; background: #dfe1e3; }
.lead { font-size: 40px; font-weight: 300; line-height: 60px; letter-spacing: -1.15px; white-space: nowrap; }
.select { display: flex; align-items: center; height: 72px; margin: 30px 4px 32px 0; padding: 2px 20px 0 20px; border: 2px solid #ccc; border-radius: 8px; background: #fff; color: #333; letter-spacing: -1.4px; }
.select-value { flex: 1; }
.select-clear { margin-right: 17px; color: #999; font-size: 34px; letter-spacing: 0; }
.select-arrow { border: 10px solid transparent; border-top-color: #999; border-bottom: 0; }
.chart { display: block; width: 1700px; height: 800px; }
.town { fill: #f5f5f3; }
.wood { fill: #eef4ef; }
.water { fill: #d3dadf; }
.lane, .river, .stream, .casing, .road, .ghost { fill: none; stroke-linejoin: round; }
.tile path, #west-roads path, #east-roads path, #east-links path { vector-effect: non-scaling-stroke; }
.lane { stroke: #eeeeed; stroke-width: 1.8; }
.river { stroke: #d6dee3; stroke-width: 3; }
.stream { stroke: #dae1e5; stroke-width: 2.4; }
.casing { stroke: #e3e3e3; stroke-width: 9; }
.road { stroke: #fff; stroke-width: 5.5; }
.casing.thin { stroke: #ebebea; stroke-width: 5.5; }
.road.thin { stroke-width: 3; }
.casing.link { stroke: #ebebea; stroke-width: 7; }
.road.link { stroke-width: 4.5; }
.ghost { stroke: #5c9d78; stroke-width: 6; opacity: .08; }
.places text, .city { font: 600 23px "Open Sans", sans-serif; letter-spacing: 0; fill: #99a7b7; stroke: #fafaf8; stroke-width: 3px; paint-order: stroke; }
.places text { font-weight: 700; }
.city { font-size: 27px; font-weight: 700; fill: #8b9ba3; stroke: none; opacity: .35; }
.areas path { stroke: #46584d; stroke-width: 5.5; stroke-linejoin: round; }
.areas .chosen { stroke: #000; stroke-width: 12; }
.ticks { font: 24px "DejaVu Sans", sans-serif; letter-spacing: -.2px; fill: #2a3f5f; }
.question { margin-top: 10px; font-size: 48px; font-weight: 800; line-height: 58px; letter-spacing: -.95px; }
.slider-title { margin-top: 22px; letter-spacing: -.72px; }
.slider { width: 1596px; margin: 40px 0 0 50px; }
.track { display: flex; justify-content: space-between; align-items: center; height: 8px; background: #e9e9e9; }
.track i { position: relative; width: 16px; height: 16px; margin: 0 -8px; border: 4px solid #e9e9e9; border-radius: 50%; background: #fff; }
.track .handle { width: 28px; height: 28px; margin: 0 -14px; border-color: #57c5f7; box-shadow: 0 0 0 10px #96dbfa; }
.tip { position: absolute; left: -15px; bottom: 47px; width: 48px; height: 48px; border-radius: 12px; background: #6c6c6c; color: #fff; box-shadow: 0 0 8px #d9d9d9; font: 24px/50px "Open Sans", sans-serif; letter-spacing: -.6px; text-align: center; }
.tip::after { content: ""; position: absolute; left: 16px; top: 48px; border: 8px solid transparent; border-top-color: #6c6c6c; border-bottom: 0; }
.marks { display: flex; justify-content: space-between; margin: 23px -40px 0; font-size: 24px; line-height: 30px; letter-spacing: -1px; }
.marks span { width: 80px; text-align: center; }
.m10 { color: #000; } .m20 { color: gray; } .m30 { color: darkgray; } .m40 { color: silver; } .m50 { color: lightgreen; } .m60 { color: palegreen; } .m70 { color: springgreen; } .m80 { color: forestgreen; } .m90 { color: darkgreen; }
.cards { display: flex; flex-direction: column; gap: 48px; width: 940px; padding: 27px 22px 0 0; }
.card { flex: none; width: 918px; border: 2px solid #343a40; border-radius: 8px; overflow: hidden; white-space: nowrap; }
.intro { padding: 42px 40px 70px; border-color: #28a745; letter-spacing: -.84px; }
.head { display: flex; align-items: center; height: 96px; padding: 4px 41px 0 11px; border-bottom: 2px solid #d9d9d9; background: #f7f7f7; }
.icon { width: 48px; height: 48px; margin: -8px 1px 0 0; }
.icon.bird { margin-top: -2px; }
.icon.coins { margin-top: -4px; }
.head h3 { flex: 1; font-size: 40px; font-weight: 600; letter-spacing: -1.55px; }
.head a { color: #007bff; letter-spacing: -1.05px; }
.body { padding: 42px 40px 40px; }
.gap { margin-bottom: 32px; }
.progress { height: 60px; margin-top: -2px; border-radius: 8px; background: #e9ecef; overflow: hidden; }
.bar { height: 60px; background: linear-gradient(45deg, rgba(255,255,255,.15) 25%, transparent 25%, transparent 50%, rgba(255,255,255,.15) 50%, rgba(255,255,255,.15) 75%, transparent 75%) 0 0 / 32px 32px #28a745; color: #fff; font-size: 40px; line-height: 63px; letter-spacing: -1.25px; text-align: center; }
```
